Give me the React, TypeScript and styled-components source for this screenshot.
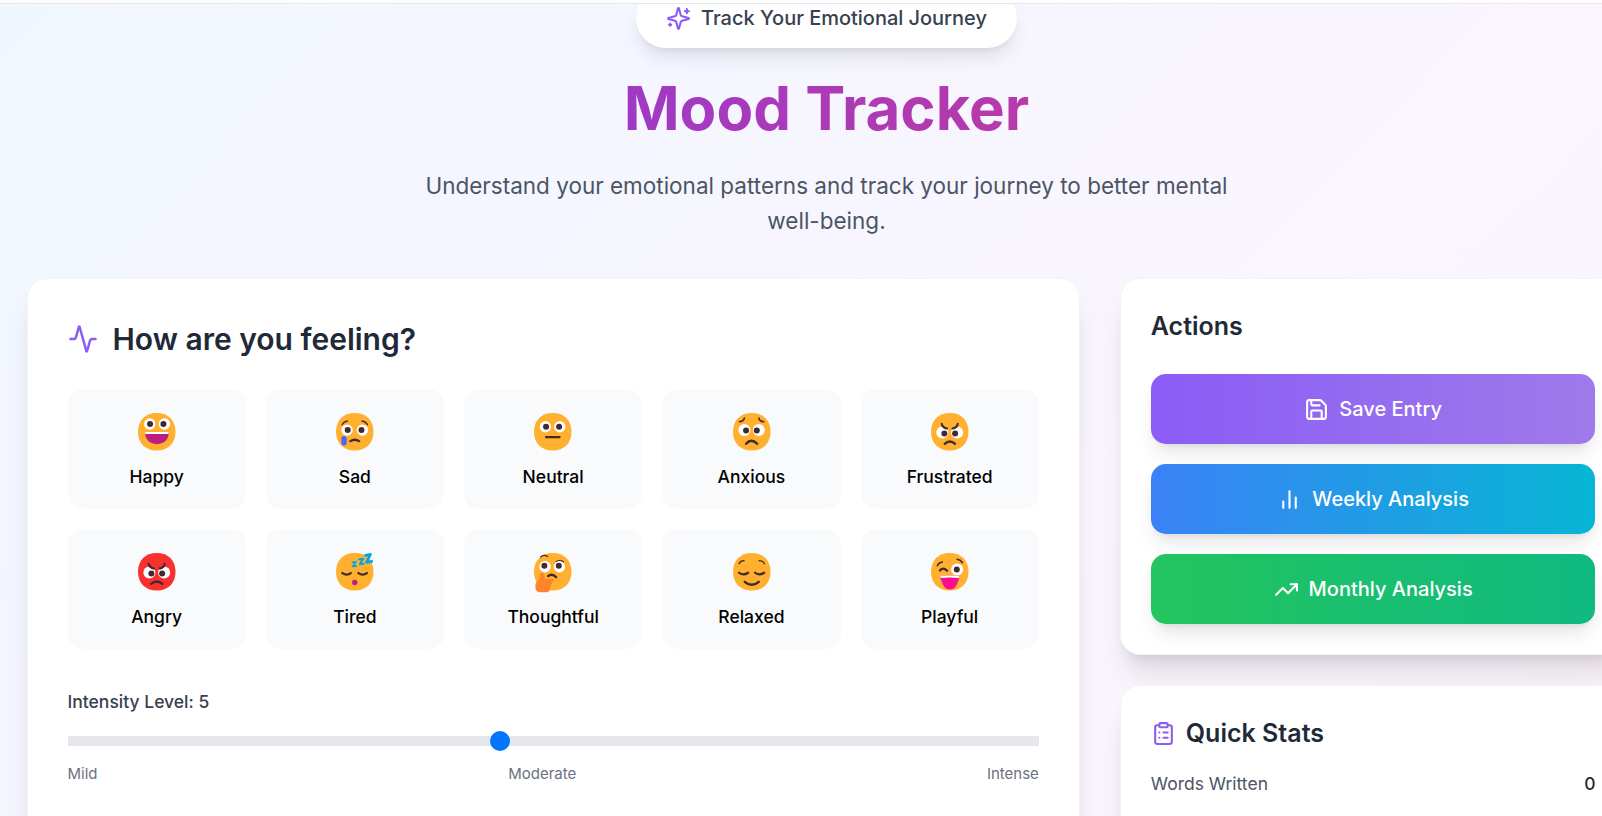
import React from "react";
import styled, { createGlobalStyle } from "styled-components";
import { Activity, ClipboardList, Save, TrendingUp } from "lucide-react";

const GlobalStyle = createGlobalStyle`
  *, *::before, *::after { box-sizing: border-box; }
  body {
    margin: 0;
    overflow: hidden;
    font-family: Inter, "Liberation Sans", sans-serif;
    color: #000;
  }
  h1, h2, h3, p { margin: 0; }
  button { font: inherit; border: 0; cursor: pointer; }
`;

const Viewport = styled.div`
  height: 816px;
  overflow: hidden;
  display: flex;
  flex-direction: column;
`;

const NavBar = styled.header`
  flex: none;
  height: 4px;
  background: #fff;
  border-bottom: 1px solid #e5e7eb;
  z-index: 1;
`;

const Page = styled.main`
  flex: none;
  width: 1653px;
  height: 1680px;
  margin-top: -106px;
  padding: 90px 26.5px 0;
  background: linear-gradient(to bottom right, #f0f7ff, #faf5ff, #fdf2f8);
`;

const Hero = styled.section`
  display: flex;
  flex-direction: column;
  align-items: center;
  gap: 30px;
  margin-bottom: 40px;
`;

const Pill = styled.div`
  display: flex;
  align-items: center;
  gap: 10px;
  height: 60px;
  padding: 15px 30px;
  border-radius: 30px;
  background: #fff;
  color: #374151;
  font-size: 20px;
  font-weight: 500;
  line-height: 30px;
  letter-spacing: -0.02px;
  box-shadow: 0 12.5px 18.75px -3.75px rgba(0, 0, 0, 0.1), 0 5px 7.5px -5px rgba(0, 0, 0, 0.1);
`;

const Title = styled.h1`
  width: 100%;
  text-align: center;
  font-size: 60px;
  font-weight: 700;
  line-height: 60px;
  color: transparent;
  background: linear-gradient(to right, #7c3aed, #db3a80);
  background-clip: text;
  -webkit-background-clip: text;
`;

const Subtitle = styled.p`
  width: 840px;
  text-align: center;
  font-size: 22.5px;
  line-height: 35px;
  color: #4b5563;
`;

const Columns = styled.div`
  display: grid;
  grid-template-columns: 1053.3px 506.7px;
  gap: 40px;
  align-items: start;
`;

const Sidebar = styled.aside`
  display: flex;
  flex-direction: column;
  gap: 30px;
`;

const Card = styled.section<{ $pad: number; $minHeight?: number }>`
  padding: ${(p) => p.$pad}px;
  min-height: ${(p) => p.$minHeight ?? 0}px;
  border: 1px solid #f3f4f6;
  border-radius: 20px;
  background: #fff;
  box-shadow: 0 25px 31.25px -6.25px rgba(0, 0, 0, 0.1), 0 10px 12.5px -7.5px rgba(0, 0, 0, 0.1);
`;

const Heading = styled.h2<{ $large?: boolean }>`
  display: flex;
  align-items: center;
  gap: ${(p) => (p.$large ? 15 : 10)}px;
  font-size: ${(p) => (p.$large ? 30 : 25)}px;
  line-height: ${(p) => (p.$large ? 40 : 35)}px;
  font-weight: 600;
  color: #1f2937;
`;

const MoodGrid = styled.div`
  display: grid;
  grid-template-columns: repeat(5, 1fr);
  gap: 20px;
  margin: 30px 0 40px;
`;

const MoodTile = styled.button`
  display: flex;
  flex-direction: column;
  align-items: center;
  gap: 10px;
  height: 120px;
  padding: 20px;
  border-radius: 15px;
  background: #f9fafb;
  font-size: 17.5px;
  line-height: 25px;
  font-weight: 500;
  color: #000;
`;

const Face = styled.span`
  display: flex;
  align-items: center;
  height: 45px;
`;

const IntensityLabel = styled.label`
  display: block;
  font-size: 17.5px;
  line-height: 25px;
  font-weight: 500;
  color: #374151;
`;

const Slider = styled.input`
  display: block;
  appearance: none;
  width: 100%;
  height: 10px;
  margin: 22px 0 18px;
  background: #e5e7eb;
  outline: none;

  &::-webkit-slider-thumb {
    appearance: none;
    width: 20px;
    height: 20px;
    border-radius: 50%;
    background: #0075ff;
  }
`;

const Scale = styled.div`
  display: flex;
  justify-content: space-between;
  font-size: 15px;
  line-height: 20px;
  color: #6b7280;
`;

const ActionList = styled.div`
  display: flex;
  flex-direction: column;
  gap: 20px;
  margin-top: 30px;
`;

const ActionButton = styled.button<{ $from: string; $to: string }>`
  display: flex;
  align-items: center;
  justify-content: center;
  gap: 10px;
  height: 70px;
  border-radius: 15px;
  background: linear-gradient(to right, ${(p) => p.$from}, ${(p) => p.$to});
  color: #fff;
  font-size: 20px;
  line-height: 30px;
  font-weight: 500;
  box-shadow: 0 12.5px 18.75px -3.75px rgba(0, 0, 0, 0.1), 0 5px 7.5px -5px rgba(0, 0, 0, 0.1);
`;

const StatRow = styled.div`
  display: flex;
  justify-content: space-between;
  margin-top: 20px;
  font-size: 17.5px;
  line-height: 25px;
  color: #4b5563;
`;

const StatValue = styled.span`
  font-weight: 500;
  color: #1f2937;
`;

const SparklesIcon = () => (
  <svg width="25" height="25" viewBox="0 0 24 24" fill="none" stroke="#8b5cf6" strokeWidth="2" strokeLinecap="round" strokeLinejoin="round">
    <path d="M9.937 15.5A2 2 0 0 0 8.5 14.063l-6.135-1.582a.5.5 0 0 1 0-.962L8.5 9.936A2 2 0 0 0 9.937 8.5l1.582-6.135a.5.5 0 0 1 .963 0L14.063 8.5A2 2 0 0 0 15.5 9.937l6.135 1.581a.5.5 0 0 1 0 .964L15.5 14.063a2 2 0 0 0-1.437 1.437l-1.582 6.135a.5.5 0 0 1-.963 0z" />
    <path d="M20 3v4M22 5h-4M4 17v2M5 18H3" />
  </svg>
);

const BarsIcon = () => (
  <svg width="25" height="25" viewBox="0 0 24 24" fill="none" stroke="currentColor" strokeWidth="2" strokeLinecap="round">
    <path d="M18 20V10M12 20V4M6 20v-6" />
  </svg>
);

const DARK = "#402a32";

const Stroke = ({ d, w = 6 }: { d: string; w?: number }) => (
  <path d={d} fill="none" stroke={DARK} strokeWidth={w} strokeLinecap="round" strokeLinejoin="round" />
);

const Eye = ({ x, y, px, py = y, r = 17 }: { x: number; y: number; px: number; py?: number; r?: number }) => (
  <>
    <circle cx={x} cy={y} r={r} fill="#fff" />
    <circle cx={px} cy={py} r="9" fill={DARK} />
  </>
);

const faces: Record<string, React.ReactNode> = {
  Happy: (
    <>
      <Eye x={35} y={33} px={36} />
      <Eye x={79} y={33} px={76} />
      <path d="M21 57H92C92 80 77 93 56.500 93S21 80 21 57Z" fill="#bb1d80" />
      <path d="M21 57H92Q92 60 91 63H22Q21 60 21 57Z" fill="#fff" />
    </>
  ),
  Sad: (
    <>
      <Stroke d="M18 35Q24 25 34 24M78 24Q88 25 94 35" w={4} />
      <Eye x={33} y={51} px={35} />
      <Eye x={79} y={51} px={76} />
      <Stroke d="M43 84Q56 76 69 84" w={7} />
      <rect x="16" y="69" width="16" height="28" rx="8" fill="#4668fb" />
    </>
  ),
  Neutral: (
    <>
      <Eye x={34} y={41} px={36} />
      <Eye x={77} y={41} px={75} />
      <Stroke d="M36 72H76" w={7} />
    </>
  ),
  Anxious: (
    <>
      <Stroke d="M19 26Q32 25 34 15M92 26Q79 25 77 15" w={4.500} />
      <Eye x={34} y={51} px={39} py={52} r={18} />
      <Eye x={77} y={51} px={71} py={52} r={18} />
      <Stroke d="M39 92Q55 74 72 92" w={7} />
    </>
  ),
  Frustrated: (
    <>
      <Eye x={34} y={58} px={40} py={61} r={18} />
      <Eye x={78} y={58} px={72} py={61} r={18} />
      <path d="M27 38L46 50V38L30 32ZM85 38L66 50V38L82 32Z" fill="#ffb02e" />
      <Stroke d="M32 32Q34 44 48 46M80 32Q78 44 64 46" w={6} />
      <Stroke d="M41 92Q56 78 72 92" w={7} />
    </>
  ),
  Angry: (
    <>
      <Eye x={34} y={58} px={40} py={61} r={18} />
      <Eye x={78} y={58} px={72} py={61} r={18} />
      <path d="M27 38L46 50V38L30 32ZM85 38L66 50V38L82 32Z" fill="#f8312f" />
      <Stroke d="M32 32Q34 44 48 46M80 32Q78 44 64 46" w={6} />
      <Stroke d="M39 92Q56 78 73 92" w={7} />
    </>
  ),
  Tired: (
    <>
      <Stroke d="M19 60Q32 69 44 60M67 60Q80 69 92 60" w={7} />
      <circle cx="56" cy="88" r="8" fill="#bb1d80" />
      <path d="M49 28L60 26L50 40L61 39" fill="none" stroke="#00a6ed" strokeWidth="5" strokeLinecap="round" strokeLinejoin="round" />
      <path d="M69 19L81 17L71 34L82 32" fill="none" stroke="#00a6ed" strokeWidth="6" strokeLinecap="round" strokeLinejoin="round" />
      <path d="M88 7L103 4L91 28L107 25" fill="none" stroke="#00a6ed" strokeWidth="8" strokeLinecap="round" strokeLinejoin="round" />
    </>
  ),
  Thoughtful: (
    <>
      <Stroke d="M20 12Q29 3 40 10M66 26Q76 20 88 26" w={4} />
      <Eye x={33} y={41} px={31} py={38} />
      <Eye x={76} y={41} px={74} py={38} />
      <Stroke d="M42 69Q54 59 66 72" w={7} />
      <path d="M22 60C29 58 33 64 31 79L54 77C61 79 60 85 53 87Q55 91 50 95Q52 100 48 104Q49 117 38 117H18Q4 117 4 99Q4 85 16 79Q19 70 18 64Z" fill="#ff822d" />
    </>
  ),
  Relaxed: (
    <>
      <Stroke d="M18 32Q22 23 33 23M78 23Q90 23 94 32" w={4} />
      <Stroke d="M18 59Q31 69 45 59M66 59Q79 69 93 59" w={6.500} />
      <Stroke d="M35 86Q56 104 77 86" w={7} />
    </>
  ),
  Playful: (
    <>
      <Stroke d="M19 38Q23 28 34 27M78 19Q88 20 94 29" w={4.500} />
      <Stroke d="M27 52Q37 41 48 53" w={7} />
      <Eye x={78} y={49} px={77} r={18} />
      <path d="M27 67H85Q82 99 57 99Q30 99 27 67Z" fill="#bb1d80" />
      <path d="M31 75Q56 72 82 75Q78 109 57 109Q34 109 31 75Z" fill="#ff0b91" />
      <path d="M27 67H85L83 75Q56 71 29 75Z" fill="#fff" />
    </>
  ),
};

const moods = ["Happy", "Sad", "Neutral", "Anxious", "Frustrated", "Angry", "Tired", "Thoughtful", "Relaxed", "Playful"];

const MoodFace = ({ mood }: { mood: string }) => (
  <svg width="37.5" height="37.5" viewBox="0 0 112 112" overflow="visible">
    <path
      d="M56 112C90 112 112 90 112 56S90 0 56 0S0 22 0 56S22 112 56 112Z"
      fill={mood === "Angry" ? "#f8312f" : "#ffb02e"}
    />
    {faces[mood]}
  </svg>
);

export default function App() {
  return (
    <Viewport>
      <GlobalStyle />
      <NavBar />
      <Page>
        <Hero>
          <Pill>
            <SparklesIcon />
            <span>Track Your Emotional Journey</span>
          </Pill>
          <Title>Mood Tracker</Title>
          <Subtitle>Understand your emotional patterns and track your journey to better mental well-being.</Subtitle>
        </Hero>
        <Columns>
          <Card $pad={40} $minHeight={900}>
            <Heading $large>
              <Activity size={30} color="#8b5cf6" />
              How are you feeling?
            </Heading>
            <MoodGrid>
              {moods.map((mood) => (
                <MoodTile key={mood}>
                  <Face>
                    <MoodFace mood={mood} />
                  </Face>
                  <span>{mood}</span>
                </MoodTile>
              ))}
            </MoodGrid>
            <IntensityLabel htmlFor="intensity">Intensity Level: 5</IntensityLabel>
            <Slider id="intensity" type="range" min={1} max={10} defaultValue={5} />
            <Scale>
              <span>Mild</span>
              <span>Moderate</span>
              <span>Intense</span>
            </Scale>
          </Card>
          <Sidebar>
            <Card $pad={30}>
              <Heading>Actions</Heading>
              <ActionList>
                <ActionButton $from="#8b5cf6" $to="#9f7aea">
                  <Save size={25} />
                  Save Entry
                </ActionButton>
                <ActionButton $from="#3b82f6" $to="#06b6d4">
                  <BarsIcon />
                  Weekly Analysis
                </ActionButton>
                <ActionButton $from="#22c55e" $to="#10b981">
                  <TrendingUp size={25} />
                  Monthly Analysis
                </ActionButton>
              </ActionList>
            </Card>
            <Card $pad={30} $minHeight={300}>
              <Heading>
                <ClipboardList size={25} color="#8b5cf6" />
                Quick Stats
              </Heading>
              <StatRow>
                <span>Words Written</span>
                <StatValue>0</StatValue>
              </StatRow>
            </Card>
          </Sidebar>
        </Columns>
      </Page>
    </Viewport>
  );
}
